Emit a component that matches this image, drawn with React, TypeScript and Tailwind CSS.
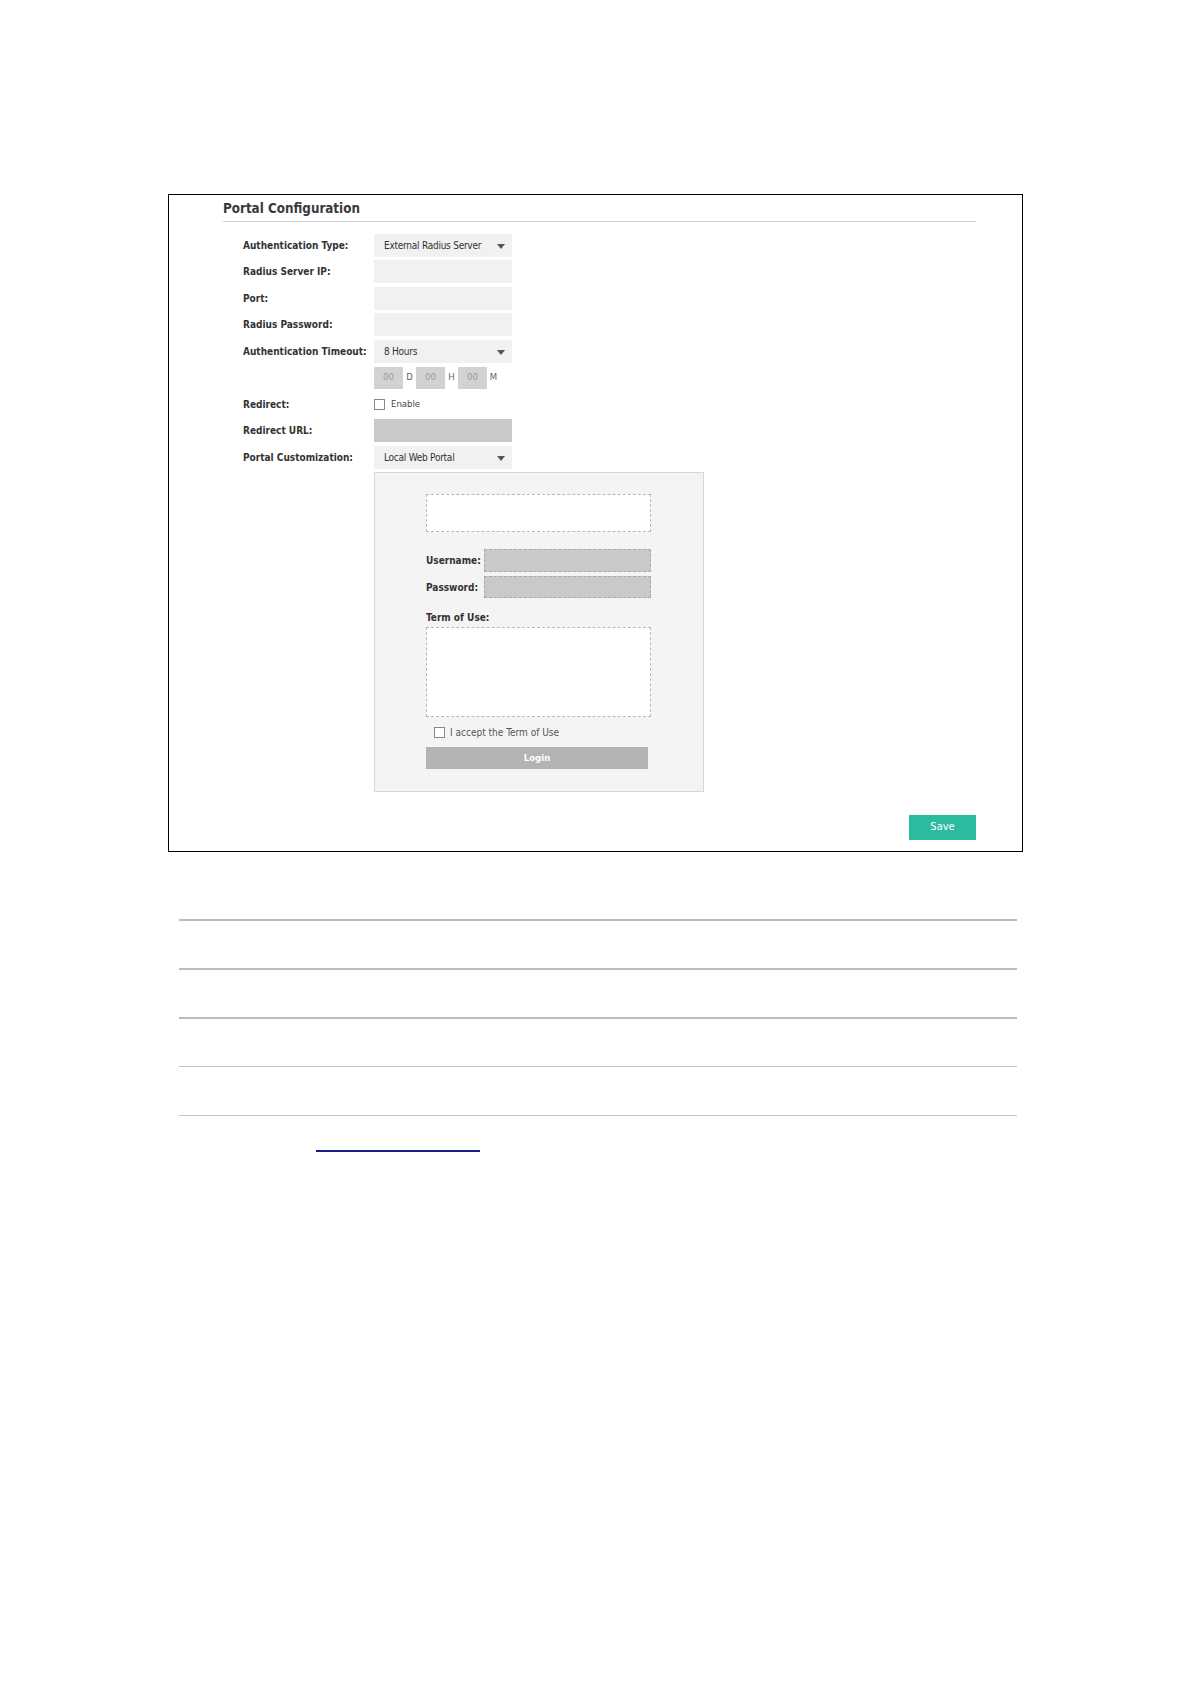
import React from "react";

const F = "font-['DejaVu_Sans_Condensed','DejaVu_Sans',sans-serif]";

function Arrow() {
  return (
    <svg width="8" height="5" viewBox="0 0 8 5" className="absolute right-[7px] top-[10px]">
      <path d="M0 0 L8 0 L4 5 Z" fill="#555" />
    </svg>
  );
}

function Row({ label, children }: { label: string; children?: React.ReactNode }) {
  return (
    <div className="flex h-[23px] items-center">
      <div className="w-[131px] shrink-0 text-[10px] font-bold text-[#333]">{label}</div>
      {children}
    </div>
  );
}

function Select({ value }: { value: string }) {
  return (
    <div className="relative flex h-[23px] w-[138px] items-center bg-[#f1f1f1] pl-[10px] pr-[20px]">
      <span className="whitespace-nowrap text-[10px] tracking-[-0.25px] text-[#333]">{value}</span>
      <Arrow />
    </div>
  );
}

function Input({ dark }: { dark?: boolean }) {
  return <div className={`h-[23px] w-[138px] ${dark ? "bg-[#c9c9c9]" : "bg-[#f1f1f1]"}`} />;
}

function TimeBox() {
  return (
    <div className="flex h-[22px] w-[29px] items-center justify-center bg-[#d2d2d2] text-[9.5px] text-[#9a9a9a]">00</div>
  );
}

export default function App() {
  return (
    <div className={`min-h-[1684px] w-[1190px] bg-white ${F}`}>
      <div className="h-[194px]" />
      <div className="ml-[168px] h-[658px] w-[855px] border-[1.5px] border-black pl-[54px] pr-[46px] pt-[5px]">
        <div className="h-[22px] border-b border-[#cfcfcf] text-[13.3px] font-bold leading-[18px] text-[#3a3a3a]">
          Portal Configuration
        </div>
        <div className="mt-[11.5px] flex flex-col gap-[3.5px] pl-[20px]">
          <Row label="Authentication Type:">
            <Select value="External Radius Server" />
          </Row>
          <Row label="Radius Server IP:">
            <Input />
          </Row>
          <Row label="Port:">
            <Input />
          </Row>
          <Row label="Radius Password:">
            <Input />
          </Row>
          <Row label="Authentication Timeout:">
            <Select value="8 Hours" />
          </Row>
          <Row label="">
            <div className="flex items-center text-[9.5px] text-[#666]">
              <TimeBox />
              <span className="w-[13px] text-center">D</span>
              <TimeBox />
              <span className="w-[13px] text-center">H</span>
              <TimeBox />
              <span className="w-[13px] text-center">M</span>
            </div>
          </Row>
          <Row label="Redirect:">
            <div className="flex items-center gap-[6px]">
              <div className="h-[11px] w-[11px] border border-[#888] bg-white" />
              <span className="text-[9.5px] text-[#444]">Enable</span>
            </div>
          </Row>
          <Row label="Redirect URL:">
            <Input dark />
          </Row>
          <Row label="Portal Customization:">
            <Select value="Local Web Portal" />
          </Row>
          <div className="flex">
            <div className="w-[131px] shrink-0" />
            <div className="h-[320px] w-[330px] border border-[#d6d6d6] bg-[#f4f4f4] pl-[51px] pt-[21px]">
              <div className="h-[38px] w-[225px] border border-dashed border-[#b8b8b8] bg-white" />
              <div className="mt-[17px] flex h-[23px] w-[225px] items-center">
                <span className="w-[58px] text-[10px] font-bold text-[#333]">Username:</span>
                <div className="h-[23px] flex-1 border border-dashed border-[#aaa] bg-[#c9c9c9]" />
              </div>
              <div className="mt-[4px] flex h-[22px] w-[225px] items-center">
                <span className="w-[58px] text-[10px] font-bold text-[#333]">Password:</span>
                <div className="h-[22px] flex-1 border border-dashed border-[#aaa] bg-[#c9c9c9]" />
              </div>
              <div className="mt-[13px] text-[10px] font-bold leading-[14px] text-[#333]">Term of Use:</div>
              <div className="mt-[2px] h-[90px] w-[225px] border border-dashed border-[#b8b8b8] bg-white" />
              <div className="mt-[10px] flex items-center gap-[5px] pl-[8px]">
                <div className="h-[11px] w-[11px] border border-[#888] bg-white" />
                <span className="text-[10px] leading-[11px] text-[#555]">I accept the Term of Use</span>
              </div>
              <div className="mt-[9px] flex h-[22px] w-[222px] items-center justify-center bg-[#b3b3b3] text-[9.5px] font-bold text-white">
                Login
              </div>
            </div>
          </div>
        </div>
        <div className="mt-[23px] flex justify-end">
          <div className="flex h-[25px] w-[67px] items-center justify-center bg-[#2bbb9f] text-[11px] text-white">
            Save
          </div>
        </div>
      </div>
      <div className="ml-[179px] w-[838px]">
        <div className="mt-[67px] h-[2px] bg-[#bdbdbd]" />
        <div className="mt-[47px] h-[2px] bg-[#bdbdbd]" />
        <div className="mt-[47px] h-[2px] bg-[#bdbdbd]" />
        <div className="mt-[47px] h-px bg-[#c4c4c4]" />
        <div className="mt-[48px] h-px bg-[#c4c4c4]" />
        <div className="ml-[137px] mt-[34px] h-[2px] w-[164px] bg-[#1c1c8c]" />
      </div>
    </div>
  );
}
